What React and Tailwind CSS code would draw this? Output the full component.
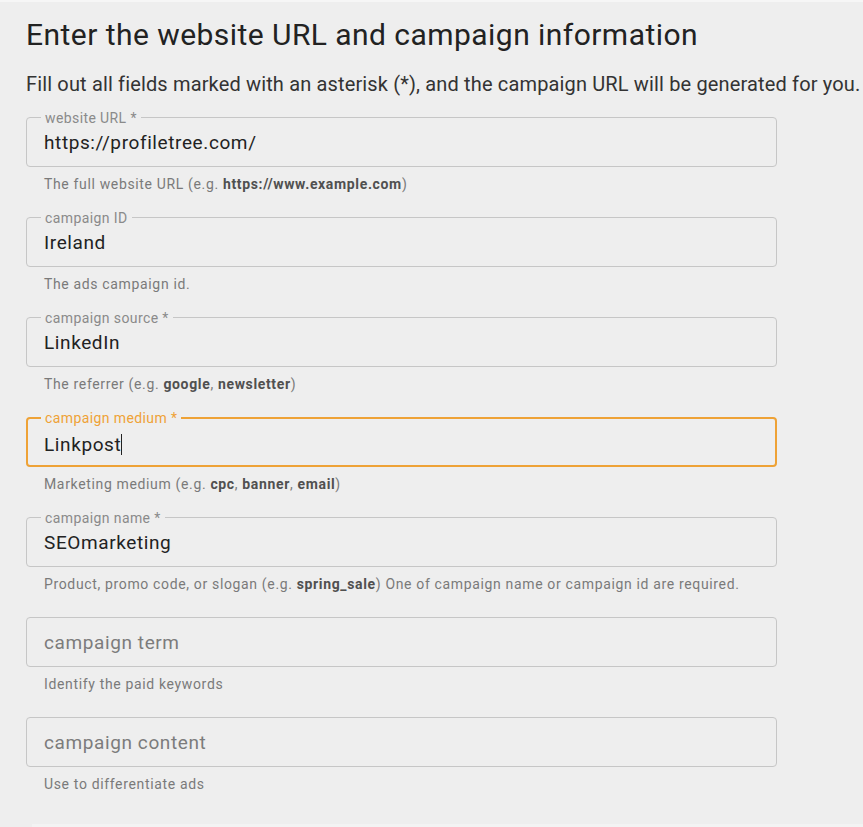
import React from 'react';

const B = ({ children }) => <b className="font-bold text-[#505050]">{children}</b>;

const fields = [
  {
    label: 'website URL *',
    value: 'https://profiletree.com/',
    help: (
      <>
        The full website URL (e.g. <B>https://www.example.com</B>)
      </>
    ),
  },
  { label: 'campaign ID', value: 'Ireland', help: 'The ads campaign id.' },
  {
    label: 'campaign source *',
    value: 'LinkedIn',
    help: (
      <>
        The referrer (e.g. <B>google</B>, <B>newsletter</B>)
      </>
    ),
  },
  {
    label: 'campaign medium *',
    value: 'Linkpost',
    focused: true,
    help: (
      <>
        Marketing medium (e.g. <B>cpc</B>, <B>banner</B>, <B>email</B>)
      </>
    ),
  },
  {
    label: 'campaign name *',
    value: 'SEOmarketing',
    help: (
      <>
        Product, promo code, or slogan (e.g. <B>spring_sale</B>) One of campaign name or campaign id are required.
      </>
    ),
  },
  { placeholder: 'campaign term', help: 'Identify the paid keywords' },
  { placeholder: 'campaign content', help: 'Use to differentiate ads' },
];

function Field({ label, value, placeholder, help, focused }) {
  return (
    <div className="flex h-[100px] flex-col">
      <div
        className={
          focused
            ? 'relative flex h-[50px] items-center rounded-[4px] border-2 border-[#eea236] pl-[16px] pt-[2px]'
            : 'relative flex h-[50px] items-center rounded-[4px] border border-[#c6c6c6] pl-[17px] pt-[2px]'
        }
      >
        {label && (
          <span
            className={
              focused
                ? 'absolute -top-[9px] left-[13px] whitespace-nowrap bg-[#eeeeee] px-[4px] text-[14px] leading-[16px] tracking-[0.4px] text-[#eea236]'
                : 'absolute -top-[8px] left-[14px] whitespace-nowrap bg-[#eeeeee] px-[4px] text-[14px] leading-[16px] tracking-[0.4px] text-[#8a8a8a]'
            }
          >
            {label}
          </span>
        )}
        {value ? (
          <span className="text-[19px] leading-[24px] tracking-[0.6px] text-[#222]">
            {value}
            {focused && <span className="inline-block h-[21px] w-[1px] translate-y-[4px] bg-[#222]" />}
          </span>
        ) : (
          <span className="text-[19px] leading-[24px] tracking-[0.6px] text-[#7c7c7c]">{placeholder}</span>
        )}
      </div>
      <div className="mt-[9px] whitespace-nowrap pl-[18px] text-[14px] leading-[16px] tracking-[0.65px] text-[#7a7a7a]">
        {help}
      </div>
    </div>
  );
}

export default function App() {
  return (
    <div className="relative min-h-[827px] overflow-hidden bg-[#eeeeee] font-['Roboto',sans-serif]">
      <div className="h-[2px] bg-[#f6f6f6]" />
      <div className="pl-[26px]">
        <h1 className="pt-[16px] text-[30px] font-normal leading-[34px] tracking-[0.45px] text-[#222]">
          Enter the website URL and campaign information
        </h1>
        <p className="mt-[19px] whitespace-nowrap text-[20px] leading-[26px] tracking-[0.15px] text-[#333]">
          Fill out all fields marked with an asterisk (*), and the campaign URL will be generated for you.
        </p>
        <div className="mt-[20px] w-[751px]">
          {fields.map((f, i) => (
            <Field key={i} {...f} />
          ))}
        </div>
      </div>
      <div className="absolute bottom-0 left-[32px] right-0 h-[3px] bg-[#f3f3f3]" />
    </div>
  );
}
